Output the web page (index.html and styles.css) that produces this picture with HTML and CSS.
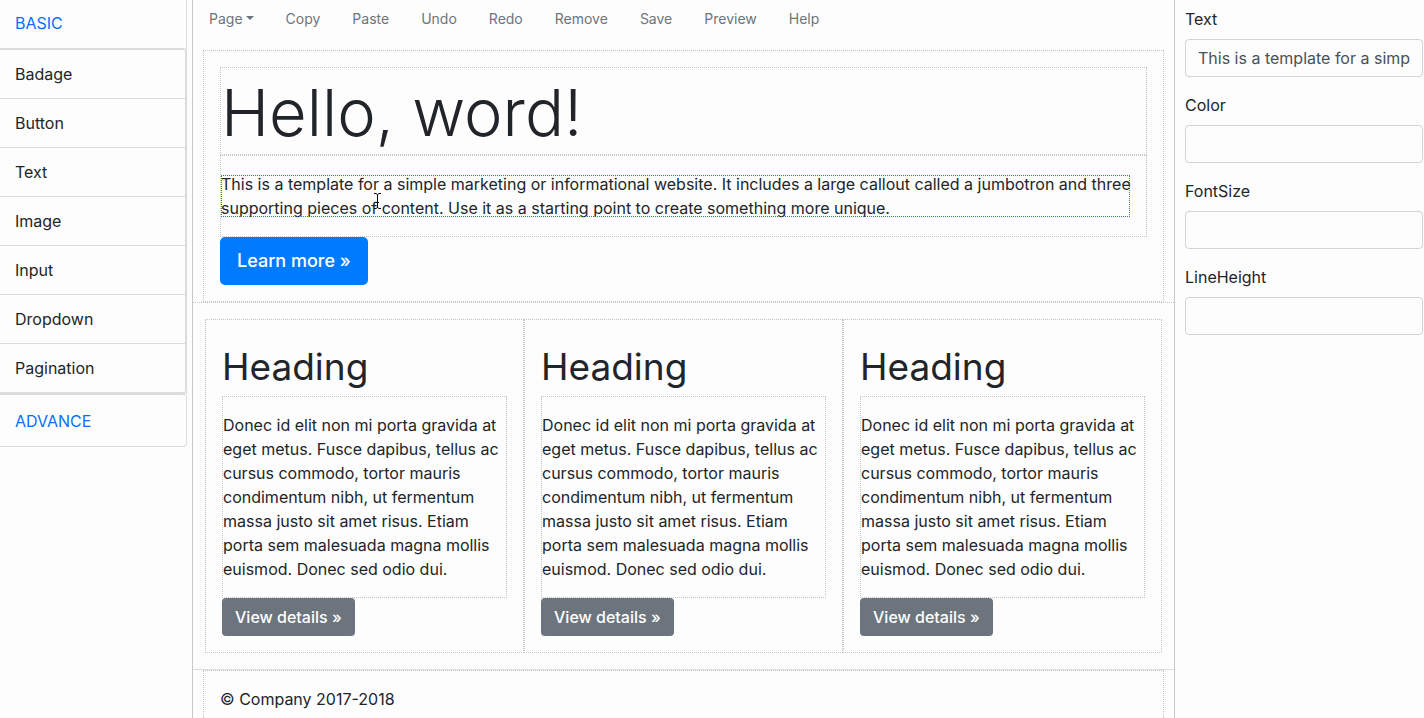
FILE: index.html
```html
<!DOCTYPE html>
<html lang="en">
<head>
<meta charset="utf-8">
<title>Page builder</title>
<link rel="stylesheet" href="styles.css">
</head>
<body>
<div class="app">
  <aside class="palette">
    <section class="group group-open">
      <a class="group-title" href="#basic">BASIC</a>
      <ul class="items" id="basic">
        <li>Badage</li>
        <li>Button</li>
        <li>Text</li>
        <li>Image</li>
        <li>Input</li>
        <li>Dropdown</li>
        <li>Pagination</li>
      </ul>
    </section>
    <section class="group group-closed">
      <a class="group-title" href="#advance">ADVANCE</a>
    </section>
  </aside>

  <main class="canvas">
    <nav class="menu">
      <button class="menu-item" type="button">Page<span class="caret"></span></button>
      <button class="menu-item" type="button">Copy</button>
      <button class="menu-item" type="button">Paste</button>
      <button class="menu-item" type="button">Undo</button>
      <button class="menu-item" type="button">Redo</button>
      <button class="menu-item" type="button">Remove</button>
      <button class="menu-item" type="button">Save</button>
      <button class="menu-item" type="button">Preview</button>
      <button class="menu-item" type="button">Help</button>
    </nav>

    <section class="jumbotron">
      <h1 class="display">Hello, word!</h1>
      <div class="lead">
        <p class="selected">This is a template for a simple marketing or informational website. It includes a large callout called a jumbotron and three supporting pieces of content. Use it as a starting point to create something more unique.</p>
        <svg class="ibeam" width="9" height="16" viewBox="0 0 9 16" fill="none" stroke="#000"><path d="M1 .5h2l1.500 1 1.500-1h2M4.500 1.500v13M1 15.500h2l1.500-1 1.500 1h2M3 9.500h3"/></svg>
      </div>
      <a class="btn btn-primary" href="#more">Learn more »</a>
    </section>

    <section class="row">
      <article class="col">
        <h2 class="heading">Heading</h2>
        <p class="copy">Donec id elit non mi porta gravida at eget metus. Fusce dapibus, tellus ac cursus commodo, tortor mauris condimentum nibh, ut fermentum massa justo sit amet risus. Etiam porta sem malesuada magna mollis euismod. Donec sed odio dui.</p>
        <a class="btn btn-secondary" href="#details-1">View details »</a>
      </article>
      <article class="col">
        <h2 class="heading">Heading</h2>
        <p class="copy">Donec id elit non mi porta gravida at eget metus. Fusce dapibus, tellus ac cursus commodo, tortor mauris condimentum nibh, ut fermentum massa justo sit amet risus. Etiam porta sem malesuada magna mollis euismod. Donec sed odio dui.</p>
        <a class="btn btn-secondary" href="#details-2">View details »</a>
      </article>
      <article class="col">
        <h2 class="heading">Heading</h2>
        <p class="copy">Donec id elit non mi porta gravida at eget metus. Fusce dapibus, tellus ac cursus commodo, tortor mauris condimentum nibh, ut fermentum massa justo sit amet risus. Etiam porta sem malesuada magna mollis euismod. Donec sed odio dui.</p>
        <a class="btn btn-secondary" href="#details-3">View details »</a>
      </article>
    </section>

    <footer class="footer">
      <p class="copyright">© Company 2017-2018</p>
    </footer>
  </main>

  <form class="props">
    <label class="label" for="text">Text</label>
    <input class="field" id="text" type="text" value="This is a template for a simple marketing or informational website.">
    <label class="label" for="color">Color</label>
    <input class="field" id="color" type="text">
    <label class="label" for="fontsize">FontSize</label>
    <input class="field" id="fontsize" type="text">
    <label class="label" for="lineheight">LineHeight</label>
    <input class="field" id="lineheight" type="text">
  </form>
</div>
</body>
</html>
```
FILE: styles.css
```css
* { box-sizing: border-box; }

body {
  margin: 0;
  background: #fdfdfd;
  color: #212529;
  font: 16px/24px Inter, "Liberation Sans", sans-serif;
}

h1, h2, p, ul { margin: 0; padding: 0; }

.app {
  display: flex;
  height: 100vh;
  overflow: hidden;
}

/* Component palette */
.palette { flex: 0 0 192px; padding-right: 5px; }

.group {
  border: solid #dcdcdc;
  border-width: 0 1px 1px 0;
}

.group-title {
  display: block;
  padding: 11px 15px 13px;
  color: #0a6eff;
  text-decoration: none;
}

.group-open .group-title { border-bottom: 1px solid #dcdcdc; }

.group-closed {
  border-top-width: 1px;
  border-radius: 0 4px 4px 0;
}

.group-closed .group-title { padding-top: 14px; }

.items {
  list-style: none;
  border: solid #dcdcdc;
  border-width: 1px 1px 0 0;
  border-radius: 0 4px 4px 0;
}

.items li {
  padding: 12px 15px;
  border-bottom: 1px solid #dcdcdc;
}

/* Editing surface */
.canvas {
  flex: 1;
  min-width: 0;
  border: solid #c8c8c8;
  border-width: 0 1px;
}

.menu {
  display: flex;
  height: 50px;
  padding-bottom: 12px;
}

.menu-item {
  padding: 0 16px;
  border: 0;
  background: none;
  color: #6c757d;
  font: inherit;
  font-size: 14px;
}

.caret {
  display: inline-block;
  margin-left: 3px;
  border: solid transparent;
  border-width: 4px 4px 0;
  border-top-color: #6c757d;
  vertical-align: 4px;
}

.jumbotron {
  margin: 0 10px;
  padding: 16px;
  border: 1px dotted #c4c4c4;
}

.display {
  padding-top: 4px;
  border: 1px dotted #c4c4c4;
  font-size: 65px;
  font-weight: 300;
  line-height: 82px;
}

.lead {
  position: relative;
  padding: 16px 0;
  border: 1px dotted #c4c4c4;
}

.selected { padding-right: 12px; }

.selected::after {
  content: "";
  position: absolute;
  inset: 19px 16px 19px 0;
  border: 1px dotted #4169e1;
}

.ibeam {
  position: absolute;
  top: 37px;
  left: 152px;
}

.btn {
  display: block;
  width: fit-content;
  padding: 7px 13px;
  border-radius: 4px;
  color: #fff;
  font-weight: 500;
  text-decoration: none;
}

.btn-primary {
  padding: 9px 17px;
  border-radius: 5px;
  background: #007bff;
  font-size: 18px;
  line-height: 30px;
}

.btn-secondary { background: #6c757d; }

.row {
  display: flex;
  padding: 16px 12px;
  border: solid #c4c4c4;
  border-width: 1px 0;
  border-top-style: dotted;
  border-bottom-color: #dcdcdc;
}

.col {
  flex: 1;
  min-width: 0;
  padding: 16px;
  border: 1px dotted #c4c4c4;
}

.heading {
  padding: 7px 0 5px;
  font-size: 37px;
  font-weight: 400;
  line-height: 48px;
}

.copy {
  padding: 16px 0;
  border: 1px dotted #c4c4c4;
}

.footer {
  margin: 0 10px;
  padding: 16px;
  border: 1px dotted #c4c4c4;
}

.copyright { padding-bottom: 16px; }

/* Property panel */
.props {
  flex: 0 0 249px;
  padding: 7px 1px 0 10px;
}

.label {
  display: block;
  margin-bottom: 8px;
}

.field {
  display: block;
  width: 100%;
  height: 38px;
  margin-bottom: 16px;
  padding: 6px 12px;
  border: 1px solid #ced4da;
  border-radius: 4px;
  background: #fdfdfd;
  color: #495057;
  font: inherit;
}
```
